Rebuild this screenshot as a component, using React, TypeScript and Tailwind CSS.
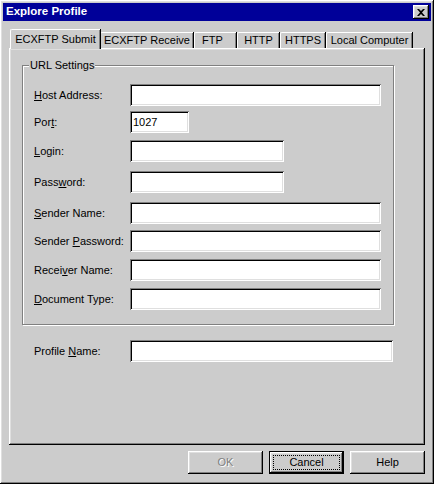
import React from 'react';

const raised =
  'shadow-[inset_-1px_-1px_0_#000,inset_1px_1px_0_#fff,inset_-2px_-2px_0_#808080,inset_2px_2px_0_#dfdfdf]';
const sunken =
  'shadow-[inset_1px_1px_0_#808080,inset_-1px_-1px_0_#fff,inset_2px_2px_0_#000,inset_-2px_-2px_0_#dfdfdf]';

function Key({ children }: { children: React.ReactNode }) {
  return <span className="underline underline-offset-[1px]">{children}</span>;
}

interface FieldProps {
  label: React.ReactNode;
  width: string;
  mt: string;
  value?: string;
}

function Field({ label, width, mt, value }: FieldProps) {
  return (
    <div className={`flex items-center h-[22px] ${mt}`}>
      <div className="w-[96px] shrink-0 whitespace-nowrap">{label}</div>
      <div className={`h-[22px] bg-white ${sunken} ${width} flex items-center pl-[3px] pt-[1px]`}>{value}</div>
    </div>
  );
}

function Tab({ label, active, width, className = '' }: { label: string; active?: boolean; width: string; className?: string }) {
  if (active) {
    return (
      <div
        className={`relative z-10 -mb-[1px] h-[20px] ${width} bg-[#cccccc] border-l border-t border-white rounded-tl-[2px] shadow-[inset_-1px_0_0_#808080,1px_0_0_#000] flex items-start justify-center pt-[3px] leading-[13px]`}
      >
        {label}
      </div>
    );
  }
  return (
    <div
      className={`h-[16px] ${width} border-l border-t border-white rounded-tl-[2px] shadow-[inset_-1px_0_0_#808080,1px_0_0_#000] flex items-start justify-center pt-[1px] leading-[13px] ${className}`}
    >
      {label}
    </div>
  );
}

export default function App() {
  return (
    <div
      className={`w-[434px] h-[484px] bg-[#cccccc] p-[3px] flex flex-col text-[11px] text-black ${raised}`}
      style={{ fontFamily: '"Liberation Sans", Arial, sans-serif' }}
    >
      {/* title bar */}
      <div className="h-[18px] bg-[#000099] flex items-center justify-between pl-[3px] pr-[2px]">
        <span className="text-white font-bold text-[11.5px]">Explore Profile</span>
        <div className={`w-[16px] h-[14px] bg-[#cccccc] ${raised} flex items-center justify-center`}>
          <svg width="8" height="7" viewBox="0 0 8 7">
            <path d="M0 0h2l2 2 2-2h2L5 3.5 8 7H6L4 5 2 7H0l3-3.5z" fill="#000" />
          </svg>
        </div>
      </div>

      {/* tabs */}
      <div className="mt-[8px] ml-[7px] h-[19px] flex items-end">
        <Tab label="ECXFTP Submit" active width="w-[90px]" />
        <Tab label="ECXFTP Receive" width="w-[93px]" />
        <Tab label="FTP" width="w-[42px] ml-[1px]" className="!justify-start pl-[7px]" />
        <Tab label="HTTP" width="w-[42px] ml-[1px]" />
        <Tab label="HTTPS" width="w-[45px] ml-[1px]" />
        <Tab label="Local Computer" width="w-[86px] ml-[1px]" />
      </div>

      {/* tab panel */}
      <div className={`ml-[6px] w-[416px] h-[397px] pt-[17px] pl-[13px] ${raised}`}>
        <div className="relative w-[372px] h-[260px] border border-[#808080] shadow-[inset_1px_1px_0_#fff,1px_1px_0_#fff] pl-[11px] pt-[18px]">
          <span className="absolute left-[6px] -top-[8px] bg-[#cccccc] px-[1px] leading-[14px]">URL Settings</span>
          <Field label={<><Key>H</Key>ost Address:</>} width="w-[251px]" mt="" />
          <Field label={<>Por<Key>t</Key>:</>} width="w-[59px]" mt="mt-[5px]" value="1027" />
          <Field label={<><Key>L</Key>ogin:</>} width="w-[154px]" mt="mt-[7px]" />
          <Field label={<>Pass<Key>w</Key>ord:</>} width="w-[154px]" mt="mt-[9px]" />
          <Field label={<><Key>S</Key>ender Name:</>} width="w-[251px]" mt="mt-[9px]" />
          <Field label={<>Sender <Key>P</Key>assword:</>} width="w-[251px]" mt="mt-[6px]" />
          <Field label={<>Recei<Key>v</Key>er Name:</>} width="w-[251px]" mt="mt-[7px]" />
          <Field label={<><Key>D</Key>ocument Type:</>} width="w-[251px]" mt="mt-[7px]" />
        </div>
        <div className="pl-[12px]">
          <Field label={<>Profile <Key>N</Key>ame:</>} width="w-[263px]" mt="mt-[15px]" />
        </div>
      </div>

      {/* buttons */}
      <div className="mt-[6px] flex justify-end gap-[6px] pr-[6px]">
        <div className={`w-[75px] h-[23px] ${raised} flex items-center justify-center text-[#808080] [text-shadow:1px_1px_0_#fff]`}>
          OK
        </div>
        <div className="w-[75px] h-[23px] border border-black">
          <div className={`w-full h-full ${raised} flex items-center justify-center p-[3px]`}>
            <div className="w-full h-full border border-dotted border-black flex items-center justify-center">Cancel</div>
          </div>
        </div>
        <div className={`w-[75px] h-[23px] ${raised} flex items-center justify-center`}>Help</div>
      </div>
    </div>
  );
}
